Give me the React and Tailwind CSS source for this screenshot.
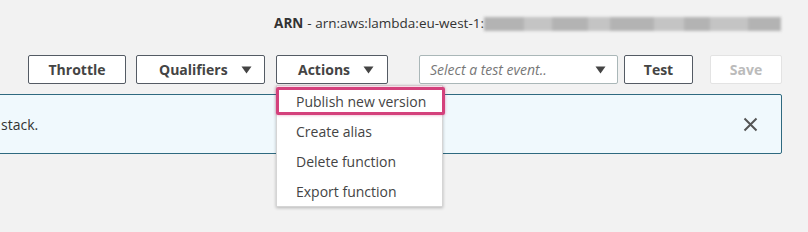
import React from 'react';

function Caret({ className = '' }) {
  return (
    <svg width="11" height="8" viewBox="0 0 11 8" className={className}>
      <path d="M0.5 0.5 L10.5 0.5 L5.5 7.5 Z" fill="#444" />
    </svg>
  );
}

const btn = 'h-[29px] flex items-center bg-white border border-[#545b64] rounded-[2px] text-[14px] font-bold text-[#444]';

export default function App() {
  const blur = [40, 28, 36, 22, 44, 30, 26, 38, 33];
  return (
    <div className="relative w-[808px] h-[232px] overflow-hidden bg-[#f2f2f2] font-['Open_Sans',sans-serif]">
      {/* ARN */}
      <div className="flex justify-end items-center h-[23px] mt-[12px] pr-[27px] text-[13.5px] text-[#333]">
        <span className="font-bold">ARN</span>
        <span className="ml-[4px]">- arn:aws:lambda:eu-west-1:</span>
        <div className="flex h-[14px] w-[297px] blur-[1.5px]">
          {blur.map((w, i) => (
            <div key={i} className={i % 2 ? 'h-full bg-[#c4c4c4]' : 'h-full bg-[#b3b3b3]'} style={{ width: w }} />
          ))}
        </div>
      </div>

      {/* toolbar */}
      <div className="flex items-center mt-[20px] pl-[28px]">
        <button className={`${btn} w-[98px] justify-center`}>Throttle</button>
        <button className={`${btn} w-[129px] ml-[10px] pl-[22px]`}>
          Qualifiers
          <Caret className="ml-[13px]" />
        </button>
        <div className="relative ml-[11px]">
          <button className={`${btn} w-[112px] pl-[21px]`}>
            Actions
            <Caret className="ml-[13px]" />
          </button>
          <div className="absolute left-0 top-[30px] z-10 w-[167px] bg-white border border-[#d5d5d5] shadow-[0_1px_3px_rgba(0,0,0,0.25)] text-[14px] text-[#444]">
            <div className="relative h-[30px] flex items-center pl-[19px]">
              <div className="absolute left-[-1px] right-[-3px] top-[1px] bottom-[1px] border-[3px] border-[#d4417c] rounded-[2px] shadow-[0_0_3px_rgba(212,65,124,0.5)]" />
              Publish new version
            </div>
            <div className="h-[30px] flex items-center pl-[19px]">Create alias</div>
            <div className="h-[30px] flex items-center pl-[19px]">Delete function</div>
            <div className="h-[30px] flex items-center pl-[19px]">Export function</div>
          </div>
        </div>
        <div className="ml-[31px] w-[199px] h-[29px] flex items-center justify-between bg-white border border-[#aab7b8] rounded-[2px] pl-[10px] pr-[11px] text-[14px] italic text-[#777]">
          Select a test event..
          <Caret />
        </div>
        <button className={`${btn} w-[69px] ml-[6px] justify-center`}>Test</button>
        <button className="h-[29px] w-[72px] ml-[17px] flex items-center justify-center bg-white border border-[#e3e3e3] rounded-[2px] text-[14px] font-bold text-[#bbb]">
          Save
        </button>
      </div>

      {/* info banner */}
      <div className="flex items-center justify-between h-[60px] mt-[10px] ml-[-20px] w-[802px] bg-[#f0f9fd] border border-[#2f6a80] rounded-[2px] pl-[20px] pr-[23px] text-[14px] text-[#333]">
        <span>stack.</span>
        <svg width="15" height="15" viewBox="0 0 15 15">
          <path d="M1.5 1.5 L13.5 13.5 M13.5 1.5 L1.5 13.5" stroke="#555" strokeWidth="2" />
        </svg>
      </div>
    </div>
  );
}
